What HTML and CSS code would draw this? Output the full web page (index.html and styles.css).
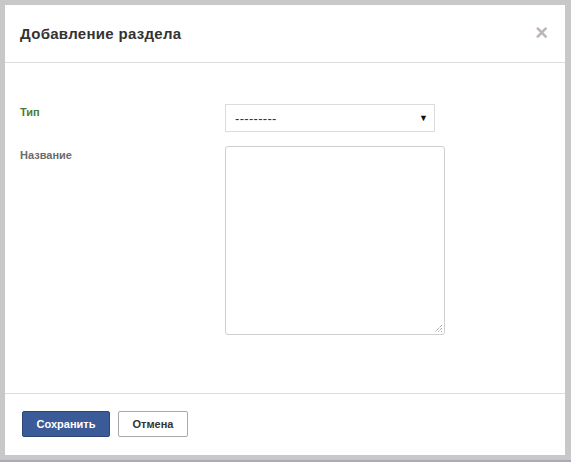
FILE: index.html
```html
<!DOCTYPE html>
<html>
<head>
<meta charset="utf-8">
<link rel="stylesheet" href="styles.css">
</head>
<body>
<div class="frame">
  <div class="modal">
    <div class="modal-header">
      <h2 class="title">Добавление раздела</h2>
      <span class="close">&#215;</span>
    </div>
    <div class="modal-body">
      <div class="row row-type">
        <label class="label label-green">Тип</label>
        <div class="select">
          <span class="select-text">---------</span>
          <span class="select-arrow">&#9660;</span>
        </div>
      </div>
      <div class="row row-name">
        <label class="label label-gray">Название</label>
        <div class="textarea">
          <svg class="grip" width="9" height="9" viewBox="0 0 9 9">
            <path d="M8 1 L1 8 M8 4 L4 8 M8 7 L7 8" stroke="#777" stroke-width="1" stroke-dasharray="1 1" fill="none"/>
          </svg>
        </div>
      </div>
    </div>
    <div class="modal-footer">
      <button class="btn btn-primary">Сохранить</button>
      <button class="btn btn-default">Отмена</button>
    </div>
  </div>
</div>
</body>
</html>
```
FILE: styles.css
```css
html, body {
  margin: 0;
  padding: 0;
}
body {
  width: 571px;
  height: 462px;
  background: #a9acb7;
  font-family: "Liberation Sans", Arial, sans-serif;
  overflow: hidden;
}
.frame {
  width: 571px;
  height: 460px;
  box-sizing: border-box;
  padding: 5px 6px 5px 5px;
  background: #c8c8c8;
}
.modal {
  background: #fff;
  height: 450px;
  display: flex;
  flex-direction: column;
}
.modal-header {
  height: 58px;
  box-sizing: border-box;
  border-bottom: 1px solid #dcdcdc;
  display: flex;
  align-items: center;
  justify-content: space-between;
  padding: 0 17px 0 15px;
  flex: none;
}
.title {
  margin: 0;
  font-size: 15px;
  font-weight: bold;
  color: #333;
  letter-spacing: 0.3px;
}
.close {
  color: #b8b8b8;
  font-size: 22px;
  font-weight: bold;
  line-height: 1;
  margin-top: -2px;
}
.modal-body {
  flex: 1;
  padding: 41px 15px 0 15px;
}
.row {
  display: flex;
  align-items: flex-start;
}
.label {
  width: 205px;
  font-size: 11px;
  font-weight: bold;
  padding-top: 2px;
}
.label-green { color: #4d7a2e; }
.label-gray { color: #6b6b6b; }
.row-type .label {
  padding-top: 2px;
}
.row-name {
  margin-top: 14px;
}
.row-name .label {
  padding-top: 3px;
}
.select {
  border: 1px solid #dcdcdc;
  display: flex;
  align-items: center;
  justify-content: space-between;
  padding: 0 6px 0 9px;
  box-sizing: border-box;
  width: 210px;
  height: 28px;
}
.select-text {
  font-size: 13px;
  color: #333;
  letter-spacing: 0.3px;
}
.select-arrow {
  font-size: 9px;
  color: #111;
}
.textarea {
  width: 220px;
  height: 189px;
  box-sizing: border-box;
  border: 1px solid #cfcfcf;
  border-radius: 3px;
  position: relative;
}
.grip {
  position: absolute;
  right: 1px;
  bottom: 1px;
}
.modal-footer {
  height: 62px;
  box-sizing: border-box;
  flex: none;
  border-top: 1px solid #dcdcdc;
  display: flex;
  align-items: flex-start;
  padding: 17px 0 0 17px;
  gap: 8px;
}
.btn {
  height: 26px;
  font-family: "Liberation Sans", Arial, sans-serif;
  font-size: 11px;
  font-weight: bold;
  border-radius: 2px;
  padding: 0;
  cursor: pointer;
}
.btn-primary {
  width: 88px;
  background: #3b5a98;
  border: 1px solid #2c4778;
  color: #fff;
}
.btn-default {
  width: 70px;
  background: #fff;
  border: 1px solid #a8a8a8;
  color: #333;
}
```
